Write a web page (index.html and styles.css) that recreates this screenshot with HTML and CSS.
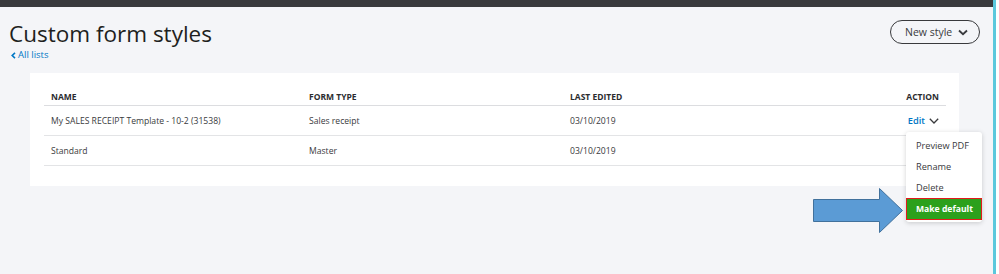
FILE: index.html
```html
<!doctype html>
<html lang="en">

<head>
    <meta charset="utf-8">
    <title>Custom form styles</title>
    <meta name="viewport" content="width=device-width, initial-scale=1">
    <link rel="stylesheet" href="styles.css">
</head>

<body>
    <div class="app">
        <div class="topbar"></div>
        <div class="head">
            <div class="head-left">
                <h1 class="title">Custom form styles</h1>
                <a class="back" href="#">
                    <svg width="5" height="7" viewBox="0 0 5 7"><path d="M4 0.8 L1.2 3.5 L4 6.2" fill="none" stroke="#0077c5" stroke-width="1.6"/></svg>
                    All lists
                </a>
            </div>
            <button class="new-btn">New style
                <svg width="10" height="7" viewBox="0 0 10 7"><path d="M1 1.5 L5 5.2 L9 1.5" fill="none" stroke="#393a3d" stroke-width="1.8"/></svg>
            </button>
        </div>

        <div class="card">
            <div class="table">
                <div class="row thead">
                    <div class="cell">NAME</div>
                    <div class="cell">FORM TYPE</div>
                    <div class="cell">LAST EDITED</div>
                    <div class="cell action">ACTION</div>
                </div>
                <div class="row">
                    <div class="cell">My SALES RECEIPT Template - 10-2 (31538)</div>
                    <div class="cell">Sales receipt</div>
                    <div class="cell">03/10/2019</div>
                    <div class="cell action">
                        <span class="edit">Edit</span>
                        <svg width="10" height="6" viewBox="0 0 10 6"><path d="M0.8 0.8 L5 5 L9.2 0.8" fill="none" stroke="#393a3d" stroke-width="1.3"/></svg>
                        <div class="menu">
                            <div class="menu-item">Preview PDF</div>
                            <div class="menu-item">Rename</div>
                            <div class="menu-item">Delete</div>
                            <div class="menu-item default">Make default</div>
                        </div>
                    </div>
                </div>
                <div class="row">
                    <div class="cell">Standard</div>
                    <div class="cell">Master</div>
                    <div class="cell">03/10/2019</div>
                    <div class="cell action"></div>
                </div>
            </div>
        </div>

        <!-- annotation arrow pointing at the menu item -->
        <svg class="arrow" width="92" height="46" viewBox="0 0 92 46">
            <polygon points="0.5,11.5 66.5,11.5 66.5,0.5 89.5,22.5 66.5,44.5 66.5,33.5 0.5,33.5" fill="#5b9bd5" stroke="#41719c" stroke-width="1"/>
        </svg>
    </div>
</body>

</html>
```

FILE: styles.css
```css
html,
body {
    margin: 0;
    padding: 0;
    height: 100%;
    background: #fff;
    font-family: 'Open Sans', sans-serif;
    color: #393a3d;
}

.app {
    position: relative;
    width: 993px;
    height: 100%;
    background: #f4f5f8;
    border-right: 3px solid #5bc8dc;
}

.topbar {
    height: 7px;
    background: #393a3d;
}

.head {
    display: flex;
    justify-content: space-between;
    align-items: flex-start;
    padding: 12px 13px 0 9px;
}

.title {
    margin: 0;
    font-size: 22.5px;
    font-weight: 400;
    line-height: 30px;
    color: #1e1f21;
}

.back {
    display: flex;
    align-items: center;
    gap: 2px;
    margin-left: 2px;
    font-size: 9.5px;
    line-height: 12px;
    color: #0077c5;
    text-decoration: none;
}

.new-btn {
    display: flex;
    align-items: center;
    gap: 6px;
    height: 24px;
    width: 90px;
    margin: 1px 0 0;
    padding: 0 0 0 14px;
    border: 1px solid #393a3d;
    border-radius: 12px;
    background: transparent;
    font-family: 'Open Sans', sans-serif;
    font-size: 10.5px;
    color: #393a3d;
}

.card {
    width: 902px;
    margin: 12px 0 0 30px;
    padding: 15px 13px 20px 14px;
    background: #fff;
}

.row {
    display: grid;
    grid-template-columns: 258px 261px 1fr 100px;
    align-items: center;
    height: 29px;
    border-bottom: 1px solid #e3e4e6;
    font-size: 8.6px;
}

.thead {
    height: 17px;
    font-size: 8.5px;
    font-weight: 700;
    color: #2b2c2f;
    border-bottom-color: #dcdde0;
}

.cell {
    padding-left: 7px;
}

.cell.action {
    position: relative;
    display: flex;
    justify-content: flex-end;
    align-items: center;
    gap: 4px;
    padding-right: 7px;
}

.edit {
    font-size: 9.3px;
    font-weight: 600;
    color: #0077c5;
}

.menu {
    position: absolute;
    top: 18px;
    right: -36px;
    width: 76px;
    padding: 3px 0 2px;
    background: #fff;
    border-radius: 3px;
    box-shadow: 0 1px 5px rgba(0, 0, 0, 0.18);
    text-align: left;
    z-index: 2;
}

.menu-item {
    height: 21px;
    line-height: 21px;
    padding-left: 10px;
    font-size: 9.2px;
    color: #393a3d;
}

.menu-item.default {
    height: 20px;
    line-height: 20px;
    padding-left: 9px;
    border: 1px solid #e21b1b;
    background: #2ca01c;
    color: #fff;
    font-weight: 700;
    font-size: 8.6px;
}

.arrow {
    position: absolute;
    left: 813px;
    top: 188px;
}
```
